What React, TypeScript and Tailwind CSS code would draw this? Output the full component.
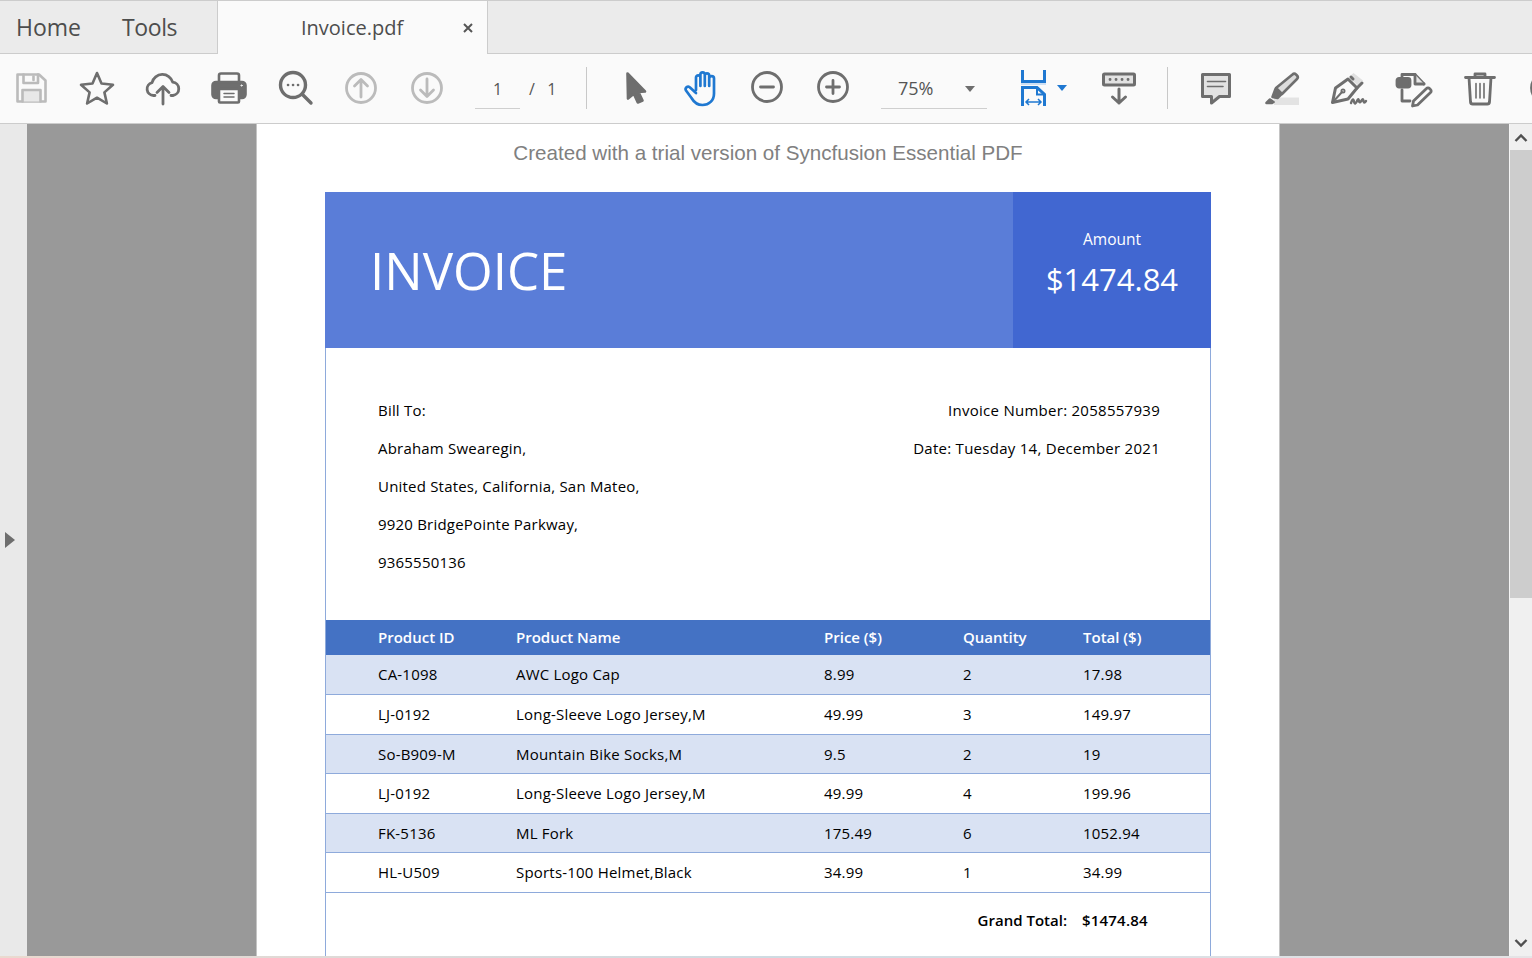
import React from 'react';

const GRAY = '#6e6e6e';
const DISABLED = '#bbbbbb';
const BLUE = '#1f78d1';

interface IconProps {
  children: React.ReactNode;
  color?: string;
  width?: number;
}

// All toolbar icons share a 36px box, drawn 1:1 in pixels
const Icon: React.FC<IconProps> = ({ children, color = GRAY, width = 2.6 }) => (
  <svg
    width="36"
    height="36"
    viewBox="0 0 36 36"
    fill="none"
    stroke={color}
    strokeWidth={width}
    strokeLinecap="round"
    strokeLinejoin="round"
    className="overflow-visible"
  >
    {children}
  </svg>
);

const Slot: React.FC<{ children: React.ReactNode; className?: string }> = ({ children, className = '' }) => (
  <div className={`w-[66px] shrink-0 flex items-center justify-center ${className}`}>{children}</div>
);

const Separator: React.FC<{ className?: string }> = ({ className = '' }) => (
  <div className={`w-px h-[42px] bg-[#c8c8c8] shrink-0 ${className}`} />
);

const Caret: React.FC<{ color: string }> = ({ color }) => (
  <svg width="10" height="6" viewBox="0 0 10 6" className="shrink-0">
    <polygon points="0,0 10,0 5,6" fill={color} />
  </svg>
);

const Toolbar: React.FC = () => (
  <div className="h-[70px] shrink-0 flex items-center pb-[2px] bg-[#fafafa] border-b border-[#cccccc] overflow-hidden font-['Open_Sans',sans-serif] text-[#555555]">
    {/* File actions */}
    <Slot className="-ml-[2px]">
      <Icon color={DISABLED}>
        <path d="M4.5 4.5H26L32.5 10.5V31.5H4.5Z" />
        <path d="M10.5 4.5V13H25V4.5" />
        <path d="M9.5 31.5V20H27.5V31.5" fill="#e8e8e8" />
        <path d="M20.5 6.5V10" />
      </Icon>
    </Slot>
    <Slot>
      <Icon>
        <polygon points="18,3 22.5,13.5 34,14.8 25.4,22.4 27.9,33.5 18,27.7 8.1,33.5 10.6,22.4 2,14.8 13.5,13.5" />
      </Icon>
    </Slot>
    <Slot>
      <Icon width={2.8}>
        <path d="M10 25.5H8.5A6.5 6.5 0 0 1 7 12.7A10.7 10.7 0 0 1 27.7 12.2A6.7 6.7 0 0 1 28 25.5H26" />
        <path d="M18 34V17M12 22.5L18 16.5L24 22.5" />
      </Icon>
    </Slot>
    <Slot>
      <Icon>
        <path d="M8 13V5.5Q8 3.5 10 3.5H26Q28 3.5 28 5.5V13" fill="#fafafa" />
        <rect x="1.5" y="12" width="33" height="16" rx="3.5" fill={GRAY} />
        <rect x="8" y="19" width="20" height="13.5" rx="1" fill="#fafafa" />
        <path d="M13 23.5H23M13 27H23" strokeWidth="1.5" />
        <circle cx="30.5" cy="15.5" r="0.6" stroke="#fafafa" strokeWidth="1" />
      </Icon>
    </Slot>
    <Slot>
      <Icon width={3.4}>
        <circle cx="16" cy="15" r="12.5" />
        <path d="M25.5 24.5L34 33" />
        <path d="M11 15h.1M16 15h.1M21 15h.1" strokeWidth="2.6" />
      </Icon>
    </Slot>
    <Slot>
      <Icon color={DISABLED} width={2.8}>
        <circle cx="18" cy="18" r="14.5" />
        <path d="M18 27V10M11.5 16L18 9.5L24.5 16" />
      </Icon>
    </Slot>
    <Slot>
      <Icon color={DISABLED} width={2.8}>
        <circle cx="18" cy="18" r="14.5" />
        <path d="M18 9V26M11.5 20L18 26.5L24.5 20" />
      </Icon>
    </Slot>

    {/* Page navigation */}
    <div className="ml-[15px] w-[45px] h-[42px] pt-[3px] shrink-0 flex items-center justify-center text-[16px] border-b border-[#cfcfcf]">1</div>
    <div className="ml-[9px] w-[58px] pt-[3px] shrink-0 text-[16px] whitespace-pre">/   1</div>

    <Separator className="-ml-px mr-px" />

    {/* View tools */}
    <Slot className="ml-[15px]">
      <Icon>
        <path d="M9.5 3.5L27 21.5L20.5 22L24.5 30.5L19.8 32.5L15.8 23.8L10 28.5Z" fill={GRAY} />
      </Icon>
    </Slot>
    <Slot>
      <Icon color={BLUE} width={2.7}>
        <path d="M12 20V7.5A2.2 2.2 0 0 1 16.4 7.5V16M16.4 16V4.5A2.2 2.2 0 0 1 20.8 4.5V16M20.8 16V5.5A2.2 2.2 0 0 1 25.2 5.5V16M25.2 16V8.5A2.2 2.2 0 0 1 30 8.5V23.5C30 30.5 25 35 18.5 35C12.5 35 9.8 32 7.5 28L2 20.5C0.5 18 4 15 6 17.5L12 23" />
      </Icon>
    </Slot>
    <Slot className="-ml-px -translate-y-px">
      <Icon width={2.8}>
        <circle cx="18" cy="18" r="14.5" />
        <path d="M11.5 18H24.5" />
      </Icon>
    </Slot>
    <Slot className="-translate-y-px">
      <Icon width={2.8}>
        <circle cx="18" cy="18" r="14.5" />
        <path d="M11.5 18H24.5M18 11.5V24.5" />
      </Icon>
    </Slot>

    {/* Zoom combo */}
    <div className="ml-[15px] w-[106px] h-[42px] pt-[3px] shrink-0 flex items-center justify-between pl-[17px] pr-[12px] text-[18px] border-b border-[#cfcfcf]">
      <span>75%</span>
      <Caret color={GRAY} />
    </div>

    <div className="ml-[29px] flex items-center gap-[5px] shrink-0">
      <svg width="36" height="36" viewBox="0 0 36 36" fill="none" stroke={BLUE} strokeWidth="3">
        <path d="M6.5 0V11.5H28.5V0" />
        <path d="M5 14H30" stroke="#cfe0f3" strokeWidth="2" />
        <path d="M6.5 36V17.5H21L28.5 24.5V36" />
        <path d="M21 17.5V24.5H28.5" strokeWidth="2" />
        <path d="M10 32H25M13 29L10 32L13 35M22 29L25 32L22 35" strokeWidth="1.5" />
      </svg>
      <Caret color={BLUE} />
    </div>
    <Slot className="ml-[19px]">
      <Icon width={3}>
        <rect x="2.5" y="4" width="31" height="11" rx="1" fill="#e2e2e2" />
        <path d="M18 19V33M11.5 27L18 33L24.5 27" />
        <path d="M9 9.5h.1M15 9.5h.1M21 9.5h.1M27 9.5h.1" strokeWidth="2.8" />
      </Icon>
    </Slot>

    <Separator className="ml-[15px]" />

    {/* Annotation tools */}
    <Slot className="ml-[15px]">
      <Icon width={3}>
        <path d="M4.5 4.5H31.5V26.5H21.5L13.5 33V26.5H4.5Z" fill="#e2e2e2" />
        <path d="M9.5 11.5H27.5M9.5 16.5H25" strokeWidth="1.6" />
      </Icon>
    </Slot>
    <Slot>
      <Icon>
        <rect x="10" y="27.5" width="25" height="7.5" fill="#e3e3e3" stroke="none" />
        <path d="M28.5 4.5A2.5 2.5 0 0 1 32 4.5L33 5.5A2.5 2.5 0 0 1 33 9L18 24L12 18Z" fill="#dcdcdc" />
        <path d="M11.5 19L17 24.5L13.5 28L8.5 27Z" fill={GRAY} />
        <path d="M2.5 33L6 29.5L9.5 32L8 33Z" fill={GRAY} />
      </Icon>
    </Slot>
    <Slot>
      <Icon width={3}>
        <path d="M19 7L23.5 3L33 10.5L28 16Z" fill="#e0e0e0" stroke="none" />
        <path d="M2.5 32.5L5.5 18L18 9L27 18L18 29Z" />
        <path d="M2.5 32.5L12 22" strokeWidth="2" />
        <circle cx="13" cy="21" r="1.6" strokeWidth="1.8" />
        <path d="M23 9L21 7M27 18L32 13" />
        <path d="M21 33Q23 27 24 31.5T27.5 30Q28.5 28 29 31T32 30Q33 28 33.5 31T36 31" strokeWidth="2.4" />
      </Icon>
    </Slot>
    <Slot>
      <Icon width={2.8}>
        <path d="M6 8V4.5H19L28 14" />
        <path d="M19 4.5V14H28" fill="#e6e6e6" />
        <path d="M6 20V31H14" />
        <rect x="1" y="8.5" width="13" height="8.5" rx="2" fill={GRAY} />
        <path d="M30.5 18.5A2 2 0 0 1 33.5 18.5L34.5 19.5A2 2 0 0 1 34.5 22.5L21.5 35L16.5 36L17.5 31Z" />
      </Icon>
    </Slot>
    <Slot>
      <Icon width={2.8}>
        <path d="M3.5 7.5H32.5M13 7.5V4H23V7.5" />
        <path d="M7 7.5L8.5 32Q8.7 34 10.7 34H25.3Q27.3 34 27.5 32L29 7.5" />
        <path d="M14 13.5V28M18 13.5V28M22 13.5V28" strokeWidth="1.6" />
      </Icon>
    </Slot>
    <Slot>
      <Icon width={2.8}>
        <circle cx="18" cy="18" r="14.5" />
      </Icon>
    </Slot>
  </div>
);

const TabBar: React.FC = () => (
  <div className="h-[54px] shrink-0 flex bg-[#ebebeb] border-y border-[#cccccc] font-['Open_Sans',sans-serif] text-[#4d4d4d]">
    <div className="w-[218px] flex items-center gap-[41px] pl-[16px] text-[23px] border-r border-[#cccccc]">
      <span>Home</span>
      <span className="tracking-[-0.4px]">Tools</span>
    </div>
    <div className="w-[270px] -mb-px flex items-center bg-[#fafafa] border-r border-[#cccccc] text-[20px]">
      <span className="ml-[83px]">Invoice.pdf</span>
      <svg width="10" height="10" viewBox="0 0 10 10" stroke="#555555" strokeWidth="2" className="ml-[60px]">
        <path d="M1 1L9 9M9 1L1 9" />
      </svg>
    </div>
  </div>
);

const COLUMNS = 'grid grid-cols-[138px_308px_139px_120px_1fr] pl-[52px] items-center';

const rows = [
  ['CA-1098', 'AWC Logo Cap', '8.99', '2', '17.98'],
  ['LJ-0192', 'Long-Sleeve Logo Jersey,M', '49.99', '3', '149.97'],
  ['So-B909-M', 'Mountain Bike Socks,M', '9.5', '2', '19'],
  ['LJ-0192', 'Long-Sleeve Logo Jersey,M', '49.99', '4', '199.96'],
  ['FK-5136', 'ML Fork', '175.49', '6', '1052.94'],
  ['HL-U509', 'Sports-100 Helmet,Black', '34.99', '1', '34.99'],
];

const billTo = [
  'Bill To:',
  'Abraham Swearegin,',
  'United States, California, San Mateo,',
  '9920 BridgePointe Parkway,',
  '9365550136',
];

const Invoice: React.FC = () => (
  <div className="mx-[68px] flex-1 flex flex-col font-['Open_Sans',sans-serif] text-black text-[15px]">
    {/* Banner */}
    <div className="h-[156px] shrink-0 flex bg-[#5a7dd8] text-white">
      <div className="flex-1 flex items-center pl-[45px] text-[51px] font-normal">INVOICE</div>
      <div className="w-[198px] bg-[#4167d1] flex flex-col items-center pt-[36px]">
        <span className="text-[15.5px] leading-[22px]">Amount</span>
        <span className="mt-[8px] text-[31px] leading-[42px]">$1474.84</span>
      </div>
    </div>

    <div className="flex-1 flex flex-col border-x border-[#8eaadb]">
      {/* Addresses */}
      <div className="h-[272px] shrink-0 flex justify-between pl-[52px] pr-[50px] pt-[42.6px] leading-[38.2px] tracking-[0.2px]">
        <div>
          {billTo.map((line) => (
            <div key={line}>{line}</div>
          ))}
        </div>
        <div className="text-right tracking-[0.27px]">
          <div>Invoice Number: 2058557939</div>
          <div>Date: Tuesday 14, December 2021</div>
        </div>
      </div>

      {/* Line items */}
      <div className={`${COLUMNS} h-[35.4px] shrink-0 bg-[#4472c4] text-white font-semibold`}>
        <span>Product ID</span>
        <span>Product Name</span>
        <span>Price ($)</span>
        <span>Quantity</span>
        <span>Total ($)</span>
      </div>
      {rows.map((row, i) => (
        <div
          key={i}
          className={`${COLUMNS} h-[39.6px] shrink-0 border-b border-[#8eaadb] tracking-[0.2px] ${i % 2 === 0 ? 'bg-[#d9e2f3]' : 'bg-white'}`}
        >
          {row.map((cell, j) => (
            <span key={j}>{cell}</span>
          ))}
        </div>
      ))}
      <div className={`${COLUMNS} h-[54px] shrink-0 font-semibold`}>
        <span className="col-span-4 text-right pr-[16px]">Grand Total:</span>
        <span className="-ml-px tracking-[0.2px]">$1474.84</span>
      </div>
    </div>
  </div>
);

const ScrollBar: React.FC = () => (
  <div className="w-[23px] shrink-0 flex flex-col bg-[#f0f0f0] border-l border-[#f5f5f5]">
    <div className="h-[26px] shrink-0 flex items-center justify-center">
      <svg width="14" height="9" viewBox="0 0 14 9" fill="none" stroke="#505050" strokeWidth="2.4">
        <path d="M1.5 8L7 2.5L12.5 8" />
      </svg>
    </div>
    <div className="h-[448px] shrink-0 bg-[#cdcdcd]" />
    <div className="flex-1" />
    <div className="h-[26px] shrink-0 flex items-center justify-center">
      <svg width="14" height="9" viewBox="0 0 14 9" fill="none" stroke="#505050" strokeWidth="2.4">
        <path d="M1.5 1L7 6.5L12.5 1" />
      </svg>
    </div>
  </div>
);

export default function App() {
  return (
    <div className="h-[958px] flex flex-col overflow-hidden bg-white">
      <TabBar />
      <Toolbar />
      <div className="flex-1 min-h-0 flex">
        {/* Collapsed navigation rail */}
        <div className="w-[27px] shrink-0 flex items-center bg-[#e9e9e9] pl-[5px]">
          <svg width="10" height="16" viewBox="0 0 10 16">
            <polygon points="0,0 10,8 0,16" fill={GRAY} />
          </svg>
        </div>
        {/* Document viewport */}
        <div className="flex-1 min-w-0 bg-[#999999] flex justify-center overflow-hidden">
          <div className="w-[1024px] shrink-0 flex flex-col bg-white border-x border-[#c4c4c4] overflow-hidden">
            <div className="h-[68px] shrink-0 pt-[16px] text-center text-[20.6px] leading-[26px] text-[#808080] font-['Liberation_Sans',sans-serif]">
              Created with a trial version of Syncfusion Essential PDF
            </div>
            <Invoice />
          </div>
        </div>
        <ScrollBar />
      </div>
      {/* Strip of whatever sits behind the window */}
      <div className="h-[2px] shrink-0 bg-gradient-to-r from-[#ead9cf] via-[#cfdbe2] to-[#e6e4e6]" />
    </div>
  );
}
